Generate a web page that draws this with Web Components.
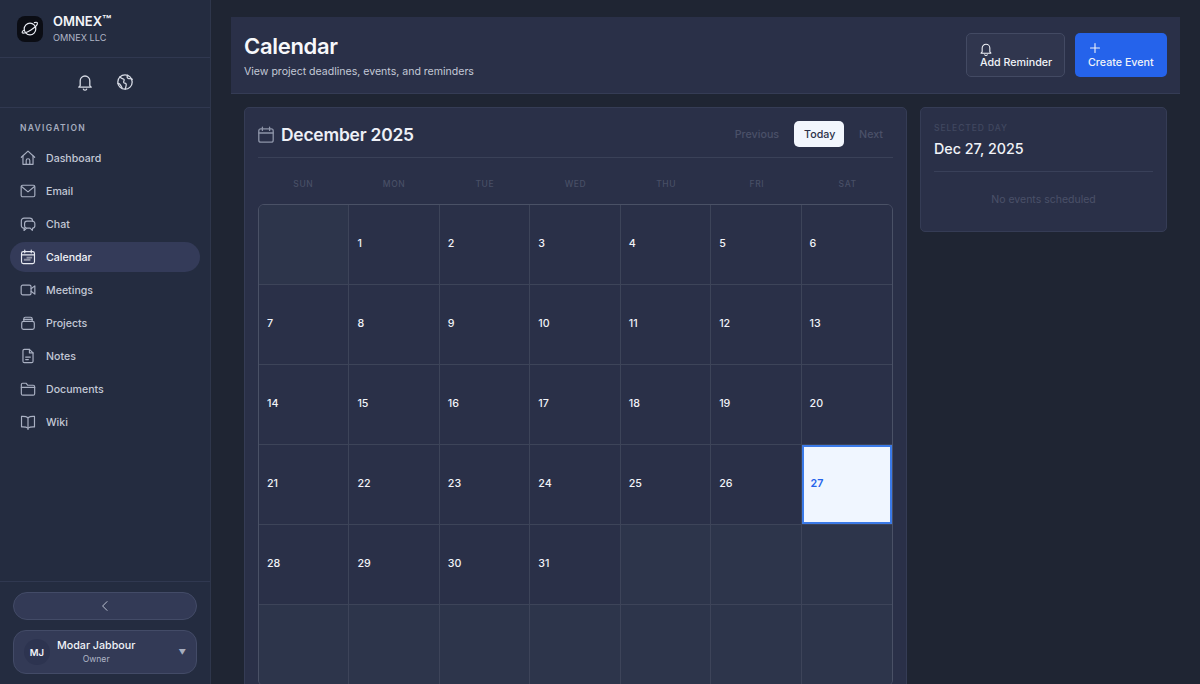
<!DOCTYPE html>
<html lang="en">
<head>
<meta charset="utf-8">
<title>Calendar</title>
<style>
  html, body { margin: 0; height: 100%; background: #1f2533; overflow: hidden; }
  body { font-family: Inter, "Liberation Sans", sans-serif; color: #fff; }
</style>
</head>
<body>
<omnex-app>
  <omnex-sidebar slot="sidebar"></omnex-sidebar>
  <page-header title="Calendar" subtitle="View project deadlines, events, and reminders"></page-header>
  <div style="display:grid;grid-template-columns:663px 247px;gap:13px;padding:13px 0 0 13px;align-items:start">
    <calendar-card></calendar-card>
    <day-panel></day-panel>
  </div>
</omnex-app>

<script>
const icons = {
  dashboard: '<path d="M2.6 9.2 10 2.4l7.4 6.8"/><path d="M4.4 7.8V17h11.2V7.8"/><path d="M8 17v-4.2a2 2 0 0 1 4 0V17"/>',
  email: '<rect x="2.4" y="3.6" width="15.2" height="12.8" rx="1.6"/><path d="M2.8 5 10 11l7.2-6"/>',
  chat: '<path d="M6 14.6H5.4a2.8 2.8 0 0 1-2.8-2.8V6.4a3 3 0 0 1 3-3H12a3 3 0 0 1 3 3v.4"/><path d="m5.8 14.6-.2 2.6 2.6-2.4"/><path d="M8.8 6.8h6.2a2.6 2.6 0 0 1 2.6 2.6v2.6a2.6 2.6 0 0 1-2.4 2.6l-.4 2.4-2.4-2.4H8.8A2.6 2.6 0 0 1 6.2 12V9.4a2.6 2.6 0 0 1 2.6-2.6Z"/>',
  calendar: '<rect x="2.8" y="4" width="14.4" height="13.4" rx="2"/><path d="M6.4 2.2v3.2M13.6 2.2v3.2M2.8 7.6h14.4"/><path fill="currentColor" stroke="none" opacity=".5" d="M8.4 9.8h6.2v1.8H8.4zM5.4 12h7.4v2.2H5.4z"/>',
  "calendar-plain": '<rect x="2.8" y="3.8" width="14.4" height="13.4" rx="2"/><path d="M6.4 2.2v3.2M13.6 2.2v3.2M2.8 8h14.4"/>',
  meetings: '<rect x="2.4" y="4.6" width="11" height="10.8" rx="1.8"/><path d="m13.4 8.6 4.2-3.2v9.2l-4.2-3.2"/>',
  projects: '<path d="M5.4 8V5.2a1.6 1.6 0 0 1 1.6-1.6h6a1.6 1.6 0 0 1 1.6 1.6V8"/><path d="M5 6h10"/><rect x="3" y="8.2" width="14" height="8.8" rx="2"/>',
  notes: '<path d="M11.6 2.6H6a1.6 1.6 0 0 0-1.6 1.6v11.6A1.6 1.6 0 0 0 6 17.4h8a1.6 1.6 0 0 0 1.6-1.6V6.6Z"/><path d="M11.6 2.6v4h4"/><path d="M7.4 11.2h5.2M7.4 14h3"/>',
  documents: '<path d="M2.6 15.2V5a1.4 1.4 0 0 1 1.4-1.4h3.8l1.8 2.2h6.2a1.6 1.6 0 0 1 1.6 1.6v7.8a1.6 1.6 0 0 1-1.6 1.6H4.2a1.6 1.6 0 0 1-1.6-1.6Z"/><path d="M2.6 8.2h14.8"/>',
  wiki: '<path d="M10 5.2C8.4 4 6 3.6 2.8 3.8v11.6c3.2-.2 5.6.2 7.2 1.4 1.6-1.2 4-1.6 7.2-1.4V3.8C14 3.6 11.6 4 10 5.2Z"/><path d="M10 5.2v13"/>',
  bell: '<path d="M5.2 13.6V8.8a4.8 4.8 0 0 1 9.6 0v4.8l1.4 1.6H3.8Z"/><path d="M8.4 17.2a1.8 1.8 0 0 0 3.2 0"/>',
  globe: '<circle cx="10" cy="10" r="7.2"/><path d="M4.9 4.9c1 1.8 3.1 1.4 4.1 2.5.8 1-1 2.2-.2 3.2.7.8 2 .4 2.4 1.6.3 1-.4 2.6-1 5"/><path d="M12.6 3.3c-.8 1.3-.6 2.5.6 3.1 1.2.5 2.8 0 4.1.8"/><path d="M2.9 11.4c1.2 0 2.2.8 2.8 2 .4.8.8 1.6 1.5 2.7"/>'
};

function icon(name, size) {
  return `<svg width="${size}" height="${size}" viewBox="0 0 20 20" fill="none" stroke="currentColor" stroke-width="1.3" stroke-linecap="round" stroke-linejoin="round" aria-hidden="true">${icons[name]}</svg>`;
}

customElements.define("omnex-app", class extends HTMLElement {
  connectedCallback() {
    this.attachShadow({ mode: "open" }).innerHTML = `
      <style>
        :host { display: flex; height: 100vh; overflow: hidden; background: #1f2533; }
        main { flex: 1; min-width: 0; padding: 17px 20px 0; overflow: hidden; }
      </style>
      <slot name="sidebar"></slot>
      <main><slot></slot></main>`;
  }
});

customElements.define("nav-item", class extends HTMLElement {
  connectedCallback() {
    const active = this.hasAttribute("active");
    this.attachShadow({ mode: "open" }).innerHTML = `
      <style>
        :host { display: flex; align-items: center; gap: 9px; height: 30px; padding: 0 0 0 9px; border-radius: 15px;
                font-size: 10.6px; font-weight: 500; color: #c3c8d6; }
        :host([active]) { background: #343b59; color: #f1f3f8; }
        svg { display: block; color: ${active ? "#e8ebf2" : "#a9b0c2"}; }
      </style>
      ${icon(this.getAttribute("icon"), 18)}<slot></slot>`;
  }
});

customElements.define("omnex-sidebar", class extends HTMLElement {
  connectedCallback() {
    const items = [["dashboard","Dashboard"],["email","Email"],["chat","Chat"],["calendar","Calendar"],["meetings","Meetings"],["projects","Projects"],["notes","Notes"],["documents","Documents"],["wiki","Wiki"]];
    this.attachShadow({ mode: "open" }).innerHTML = `
      <style>
        :host { display: flex; flex-direction: column; width: 210px; flex: none; height: 100vh;
                background: #242c40; border-right: 1px solid #2e364b; }
        .brand { display: flex; align-items: center; gap: 10px; height: 57px; padding: 0 17px; border-bottom: 1px solid #303850; flex: none; }
        .logo { width: 26px; height: 26px; border-radius: 8px; background: #0b0d14; display: grid; place-items: center; color: #e8ebf2; }
        .name { font-size: 13px; line-height: 16px; font-weight: 600; color: #f3f5f9; white-space: nowrap; }
        .name i { font-style: normal; font-size: 15px; line-height: 0; }
        .org { font-size: 9.2px; line-height: 13px; margin-top: 2px; color: #b0b6c6; }
        .tools { display: flex; justify-content: center; align-items: center; gap: 20px; height: 47px; padding-bottom: 2px; border-bottom: 1px solid #303850; color: #d5d9e3; flex: none; }
        .tools svg { display: block; }
        .label { font-size: 8.5px; font-weight: 600; letter-spacing: 1.3px; color: #a6adbf; padding: 15px 20px 9px; line-height: 11px; }
        nav { display: flex; flex-direction: column; gap: 3px; padding: 0 10px; flex: 1; }
        .foot { border-top: 1px solid #303850; padding: 10px 13px; flex: none; display: flex; flex-direction: column; gap: 10px; }
        .collapse { box-sizing: border-box; height: 28px; border: 1px solid #434b67; border-radius: 14px; background: #333a56; display: grid; place-items: center; color: #bcc2d1; }
        .user { box-sizing: border-box; display: flex; align-items: center; height: 44px; border: 1px solid #434b67; border-radius: 13px; background: #333a56; padding: 0 10px; }
        .avatar { width: 26px; height: 26px; border-radius: 50%; background: #2d3450; display: grid; place-items: center; font-size: 9.5px; font-weight: 600; color: #f1f3f8; flex: none; }
        .who { margin-left: 7px; text-align: center; white-space: nowrap; }
        .who b { display: block; font-size: 10.7px; line-height: 14px; font-weight: 500; color: #f1f3f8; }
        .who span { display: block; font-size: 8.6px; line-height: 13px; color: #b0b6c6; }
        .caret { margin-left: auto; font-size: 7.5px; color: #a6adbf; }
      </style>
      <div class="brand">
        <div class="logo">
          <svg width="20" height="20" viewBox="0 0 20 20" fill="none" stroke="currentColor" stroke-width="1.2" stroke-linecap="round"><circle cx="10" cy="10" r="5.8"/><path d="M14.4 3.6c1.5-.5 2.6-.4 2.9.1.7 1.3-2.2 4.5-6.4 7.2s-7.9 4.1-8.7 2.8c-.3-.5.2-1.4 1.2-2.4"/></svg>
        </div>
        <div><div class="name">OMNEX<i>™</i></div><div class="org">OMNEX LLC</div></div>
      </div>
      <div class="tools">${icon("bell", 20)}${icon("globe", 20)}</div>
      <div class="label">NAVIGATION</div>
      <nav>${items.map(([i, t]) => `<nav-item icon="${i}"${t === "Calendar" ? " active" : ""}>${t}</nav-item>`).join("")}</nav>
      <div class="foot">
        <div class="collapse"><svg width="14" height="14" viewBox="0 0 14 14" fill="none" stroke="currentColor" stroke-width="1" stroke-linecap="round" stroke-linejoin="round"><path d="M9 2.6 4.6 7 9 11.4"/></svg></div>
        <div class="user">
          <div class="avatar">MJ</div>
          <div class="who"><b>Modar Jabbour</b><span>Owner</span></div>
          <div class="caret">▼</div>
        </div>
      </div>`;
  }
});

customElements.define("page-header", class extends HTMLElement {
  connectedCallback() {
    this.attachShadow({ mode: "open" }).innerHTML = `
      <style>
        :host { display: flex; align-items: center; justify-content: space-between; height: 77px; box-sizing: border-box;
                padding: 0 13px; background: #2a3048; border-bottom: 1px solid #353c55; }
        h1 { margin: 0; font-size: 22px; line-height: 28px; font-weight: 600; letter-spacing: -.3px; color: #f7f8fb; }
        p { margin: 5px 0 0; font-size: 10.55px; line-height: 14px; color: #c3c8d6; }
        .text { padding-top: 1px; }
        .actions { display: flex; gap: 10px; }
        .btn { box-sizing: border-box; height: 44px; border-radius: 5px; display: flex; flex-direction: column; justify-content: center; font-size: 10.7px; font-weight: 500; line-height: 14px; color: #f1f3f8; white-space: nowrap; }
        .btn svg { display: block; }
        .ghost { width: 99px; padding: 0 13px; background: #30364e; border: 1px solid #434a63; }
        .ghost svg { margin: 0 0 -1px -2px; }
        .primary { width: 92px; padding: 0 13px; background: #2563eb; }
        .primary svg { margin-bottom: 1px; }
      </style>
      <div class="text"><h1>${this.getAttribute("title")}</h1><p>${this.getAttribute("subtitle")}</p></div>
      <div class="actions">
        <div class="btn ghost">${icon("bell", 16)}<span>Add Reminder</span></div>
        <div class="btn primary"><svg width="14" height="14" viewBox="0 0 14 14" fill="none" stroke="currentColor" stroke-width="1.1" stroke-linecap="round"><path d="M7 2.5v9M2.5 7h9"/></svg><span>Create Event</span></div>
      </div>`;
  }
});

customElements.define("calendar-day", class extends HTMLElement {
  connectedCallback() {
    this.attachShadow({ mode: "open" }).innerHTML = `
      <style>
        :host { display: flex; align-items: center; padding: 0 0 3px 8px; box-sizing: border-box; height: 80px; font-size: 10.7px; font-weight: 500;
                color: #f1f3f8; border-right: 1px solid #3d4459; border-bottom: 1px solid #3d4459; background: #2a3048; }
        :host(:nth-child(7n)) { border-right: 0; }
        :host([empty]) { background: #2d354b; }
        :host([selected]) { background: #f0f6ff; color: #2563eb; font-weight: 600; padding-left: 9px; box-shadow: inset 0 0 0 2px #3b7ae8; }
      </style>
      <slot></slot>`;
  }
});

customElements.define("calendar-card", class extends HTMLElement {
  connectedCallback() {
    const days = ["SUN","MON","TUE","WED","THU","FRI","SAT"];
    const cells = ['<calendar-day empty></calendar-day>'];
    for (let d = 1; d <= 31; d++) cells.push(`<calendar-day${d === 27 ? " selected" : ""}>${d}</calendar-day>`);
    while (cells.length < 42) cells.push('<calendar-day empty></calendar-day>');
    this.attachShadow({ mode: "open" }).innerHTML = `
      <style>
        :host { display: block; box-sizing: border-box; padding: 13px 13px 0; background: #2a3048; border: 1px solid #353c55; border-radius: 5px; height: 620px; }
        .top { display: flex; align-items: center; padding-bottom: 10px; border-bottom: 1px solid #3a4158; }
        .top svg { color: #8d94a8; display: block; margin: 1px 5px 0 -2px; }
        h2 { flex: 1; margin: 0; padding-top: 1px; font-size: 17.4px; line-height: 25px; font-weight: 600; letter-spacing: -.2px; color: #eef0f6; }
        .pager { display: flex; align-items: center; font-size: 10.7px; font-weight: 500; color: #4a5169; }
        .pager span { padding: 1px 10px 0; line-height: 25px; }
        .pager .today { background: #f2f6fd; color: #2a2f47; border-radius: 5px; margin: 0 5px; width: 30px; text-align: center; }
        .dow { display: grid; grid-template-columns: repeat(7, 1fr); height: 40px; padding-top: 6px; align-items: center; font-size: 8.5px; font-weight: 500; letter-spacing: .6px; color: #484f66; text-align: center; }
        .grid { display: grid; grid-template-columns: repeat(7, 1fr); border: 1px solid #4a5166; border-radius: 6px; overflow: hidden; }
      </style>
      <div class="top">
        ${icon("calendar-plain", 20)}
        <h2>December 2025</h2>
        <div class="pager"><span>Previous</span><span class="today">Today</span><span>Next</span></div>
      </div>
      <div class="dow">${days.map(d => `<div>${d}</div>`).join("")}</div>
      <div class="grid">${cells.join("")}</div>`;
  }
});

customElements.define("day-panel", class extends HTMLElement {
  connectedCallback() {
    this.attachShadow({ mode: "open" }).innerHTML = `
      <style>
        :host { display: block; box-sizing: border-box; height: 125px; padding: 13px; background: #2a3048; border: 1px solid #353c55; border-radius: 5px; }
        .k { font-size: 8.5px; font-weight: 500; letter-spacing: .9px; line-height: 14px; color: #414860; }
        .d { font-size: 14.3px; font-weight: 500; line-height: 20px; margin-top: 4px; padding-bottom: 12px; border-bottom: 1px solid #394059; color: #f1f3f8; }
        .e { text-align: center; font-size: 10.5px; color: #4a5169; margin-top: 21px; line-height: 14px; }
      </style>
      <div class="k">SELECTED DAY</div>
      <div class="d">Dec 27, 2025</div>
      <div class="e">No events scheduled</div>`;
  }
});
</script>
</body>
</html>
